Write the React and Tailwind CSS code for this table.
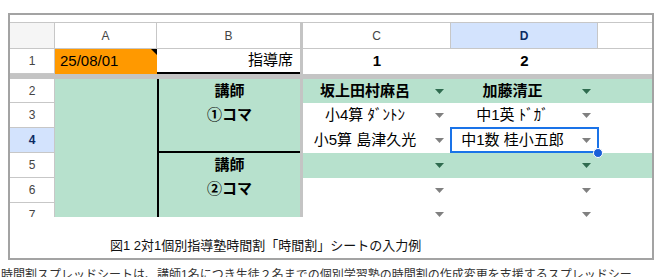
import React from "react";

const font = { fontFamily: '"Liberation Sans", "Noto Sans CJK JP", sans-serif' };

function Arrow({ dark }) {
  return (
    <svg width="9" height="5" viewBox="0 0 9 5">
      <path d="M0 0h9L4.5 5z" fill={dark ? "#2f6b4f" : "#808080"} />
    </svg>
  );
}

function DropCell({ text, bold, green, className = "", children }) {
  return (
    <div
      className={`relative flex items-center text-[15px] ${green ? "bg-[#b7e1cd]" : "bg-white"} ${className}`}
    >
      <span className={`flex-1 text-center whitespace-nowrap ${bold ? "font-bold" : ""}`}>{text}</span>
      <span className="w-[24px] flex justify-center">
        <Arrow dark={green} />
      </span>
      {children}
    </div>
  );
}

function RowNum({ n, row, active }) {
  return (
    <div
      className={`col-start-1 ${row} flex items-center justify-center border-r border-b border-[#c7c7c7] text-[12px] ${
        active ? "bg-[#d3e3fd] font-bold text-[#0b2a63]" : "bg-white text-[#444]"
      }`}
    >
      {n}
    </div>
  );
}

export default function App() {
  return (
    <div className="w-[667px] h-[277px] bg-white overflow-hidden text-black" style={font}>
      <div className="mt-[13px] ml-[8px] w-[646px] border-2 border-[#a3a3a3] bg-white">
        <div className="pt-[7px]">
          <div className="grid h-[195px] overflow-hidden grid-cols-[45px_102px_143px_3px_148px_147px_1fr] grid-rows-[27px_25px_5px_24px_25px_25px_25px_25px_25px]">
            {/* column headers */}
            <div className="col-start-1 row-start-1 bg-[#f5f5f5] border-t border-r border-b border-[#c7c7c7]" />
            <div className="col-start-2 row-start-1 flex items-center justify-center border-t border-r border-b border-[#c7c7c7] text-[12px] text-[#444]">
              A
            </div>
            <div className="col-start-3 row-start-1 flex items-center justify-center border-t border-b border-[#c7c7c7] text-[12px] text-[#444]">
              B
            </div>
            <div className="col-start-5 row-start-1 flex items-center justify-center border-t border-r border-b border-[#c7c7c7] text-[12px] text-[#444]">
              C
            </div>
            <div className="col-start-6 row-start-1 flex items-center justify-center bg-[#d3e3fd] border-t border-r border-b border-[#c7c7c7] text-[12px] font-bold text-[#0b2a63]">
              D
            </div>
            <div className="col-start-7 row-start-1 border-t border-b border-[#c7c7c7]" />

            {/* frozen bands */}
            <div className="col-start-4 row-start-1 row-span-9 bg-[#c4c4c4]" />
            <div className="col-start-1 col-span-7 row-start-3 bg-[#c4c4c4]" />

            {/* row 1 */}
            <RowNum n="1" row="row-start-2" />
            <div className="col-start-2 row-start-2 relative flex items-center bg-[#ff9900] pl-[5px] text-[15px]">
              25/08/01
              <div className="absolute top-0 right-0 w-0 h-0 border-l-[6px] border-l-transparent border-t-[6px] border-t-black" />
            </div>
            <div className="col-start-3 row-start-2 flex items-center justify-end pr-[7px] border-b-2 border-black text-[15px]">
              指導席
            </div>
            <div className="col-start-5 row-start-2 flex items-center justify-center text-[15px] font-bold">1</div>
            <div className="col-start-6 row-start-2 flex items-center justify-center text-[15px] font-bold">2</div>

            {/* row numbers 2-7 */}
            <RowNum n="2" row="row-start-4" />
            <RowNum n="3" row="row-start-5" />
            <RowNum n="4" row="row-start-6" active />
            <RowNum n="5" row="row-start-7" />
            <RowNum n="6" row="row-start-8" />
            <RowNum n="7" row="row-start-9" />

            {/* column A + B green block */}
            <div className="col-start-2 row-start-4 row-span-6 bg-[#b7e1cd]" />
            <div className="col-start-3 row-start-4 row-span-3 flex flex-col bg-[#b7e1cd] border-l-2 border-b-2 border-black text-[15px] font-bold">
              <div className="h-[24px] flex items-center justify-center">講師</div>
              <div className="h-[25px] flex items-center justify-center">①コマ</div>
            </div>
            <div className="col-start-3 row-start-7 row-span-3 flex flex-col bg-[#b7e1cd] border-l-2 border-black text-[15px] font-bold">
              <div className="h-[24px] flex items-center justify-center">講師</div>
              <div className="h-[25px] flex items-center justify-center">②コマ</div>
            </div>

            {/* row 2 */}
            <DropCell className="col-start-5 row-start-4" text="坂上田村麻呂" bold green />
            <DropCell className="col-start-6 row-start-4" text="加藤清正" bold green />
            <div className="col-start-7 row-start-4 bg-[#b7e1cd]" />

            {/* row 3 */}
            <DropCell className="col-start-5 row-start-5" text="小4算 ﾀﾞﾝﾄﾝ" />
            <DropCell className="col-start-6 row-start-5" text="中1英 ﾄﾞｶﾞ" />

            {/* row 4 */}
            <DropCell className="col-start-5 row-start-6" text="小5算 島津久光" />
            <DropCell className="col-start-6 row-start-6 z-10" text="中1数 桂小五郎">
              <div className="absolute -top-px -left-px -right-px bottom-0 border-2 border-[#1a73e8]" />
              <div className="absolute -right-[5px] -bottom-[5px] w-[10px] h-[10px] rounded-full bg-[#1a5fd8] border border-white" />
            </DropCell>

            {/* row 5 */}
            <DropCell className="col-start-5 row-start-7" text="" green />
            <DropCell className="col-start-6 row-start-7" text="" green />
            <div className="col-start-7 row-start-7 bg-[#b7e1cd]" />

            {/* rows 6, 7 */}
            <DropCell className="col-start-5 row-start-8" text="" />
            <DropCell className="col-start-6 row-start-8" text="" />
            <DropCell className="col-start-5 row-start-9 items-start pt-[9px]" text="" />
            <DropCell className="col-start-6 row-start-9 items-start pt-[9px]" text="" />
          </div>
          <div className="h-[41px] pt-[20px] pl-[100px] text-[13px] leading-[17px] text-[#111]">
            図1 2対1個別指導塾時間割「時間割」シートの入力例
          </div>
        </div>
      </div>
      <p className="mt-[6px] ml-[1px] w-[638px] text-[12px] leading-[18px] text-[#333]">
        時間割スプレッドシートは、講師1名につき生徒２名までの個別学習塾の時間割の作成変更を支援するスプレッドシートです。
      </p>
    </div>
  );
}
